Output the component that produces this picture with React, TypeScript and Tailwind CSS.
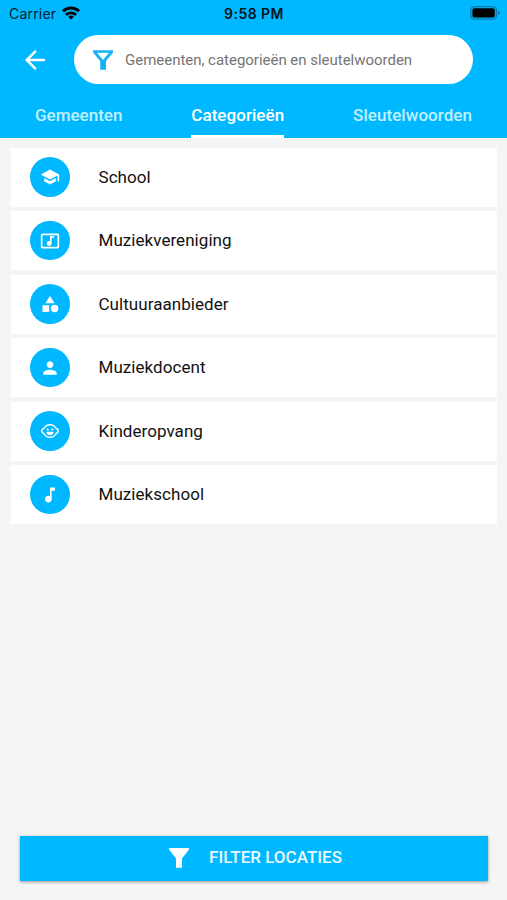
import type { ReactNode } from 'react';
import { MdArrowBack, MdCategory, MdMusicNote, MdMusicVideo, MdPerson, MdSchool } from 'react-icons/md';

function ChildFace() {
  return (
    <svg className="size-5" viewBox="0 0 24 24" fill="none" stroke="currentColor" strokeWidth="1.8">
      <path d="M4.9 8.7a8 8 0 0 1 14.2 0c1.6.5 2.8 1.8 2.8 3.3s-1.2 2.8-2.8 3.3a8 8 0 0 1-14.2 0C3.3 14.8 2.1 13.5 2.1 12s1.2-2.8 2.8-3.3z" />
      <circle cx="9.2" cy="10.2" r="1.3" fill="currentColor" stroke="none" />
      <circle cx="14.8" cy="10.2" r="1.3" fill="currentColor" stroke="none" />
      <path d="M7.8 12.9h8.4v.6a4.2 3.4 0 0 1-8.4 0z" fill="currentColor" stroke="none" />
    </svg>
  );
}

const categories: { label: string; icon: ReactNode }[] = [
  { label: 'School', icon: <MdSchool className="size-5" /> },
  { label: 'Muziekvereniging', icon: <MdMusicVideo className="size-5" /> },
  { label: 'Cultuuraanbieder', icon: <MdCategory className="size-5" /> },
  { label: 'Muziekdocent', icon: <MdPerson className="size-5" /> },
  { label: 'Kinderopvang', icon: <ChildFace /> },
  { label: 'Muziekschool', icon: <MdMusicNote className="size-5" /> },
];

function StatusBar() {
  return (
    <div className="grid h-[27px] grid-cols-3 items-center pl-[9px] pr-[7px] font-['Inter',sans-serif] text-[14px] text-[#06202c]">
      <div className="flex items-center gap-[6px]">
        <span className="tracking-[0.2px]">Carrier</span>
        <svg className="-mt-0.5 h-[14px] w-[18px]" viewBox="0 0 18 14" fill="none" stroke="#000" strokeWidth="2.9">
          <path d="M1 5.3a11.5 11.5 0 0 1 16 0" />
          <path d="M4 8.9a7.2 7.2 0 0 1 10 0" />
          <path d="M9 13.5 6.2 10.9a4 4 0 0 1 5.6 0z" fill="#000" stroke="none" />
        </svg>
      </div>
      <span className="pr-px text-center font-semibold tracking-[0.45px] text-[#03131b]">9:58 PM</span>
      <svg className="-mt-px h-[14px] w-[30px] justify-self-end" viewBox="0 0 30 14">
        <rect x="0.8" y="0.7" width="25.6" height="12.4" rx="3.6" fill="none" stroke="#0879a6" strokeWidth="1.3" />
        <rect x="2.4" y="2.3" width="22.4" height="9.2" rx="2" fill="#000" />
        <path d="M28 4.8V9q1.7-.6 1.7-2.1T28 4.800z" fill="#0879a6" />
      </svg>
    </div>
  );
}

export default function App() {
  return (
    <div className="flex h-[900px] w-[507px] flex-col bg-[#f5f5f5] font-['Roboto',sans-serif]">
      {/* Header */}
      <header className="h-[137.5px] bg-[#00b8ff]">
        <StatusBar />
        <div className="flex items-center pl-5 pt-2">
          <button type="button" aria-label="Terug" className="text-white">
            <MdArrowBack className="size-[30px]" />
          </button>
          <label className="ml-6 flex h-[49px] w-[399px] items-center rounded-full bg-white pl-[19px]">
            <svg className="size-[20px] text-[#14b4f5]" viewBox="0 0 20 20" fill="currentColor" fillRule="evenodd">
              <path d="M0 .2h20v2.3l-7 8.500v8.800H7.200V11L0 2.500zM4 2.700 10 9.900l6-7.200z" />
            </svg>
            <input
              type="text"
              placeholder="Gemeenten, categorieën en sleutelwoorden"
              className="ml-3 flex-1 pt-[2px] text-[15px] tracking-[-0.02px] outline-none placeholder:text-[#757575]"
            />
          </label>
        </div>

        {/* Tabs */}
        <nav className="flex h-[53.5px] justify-between px-[35px] text-[17px] font-medium text-[#c0f1ff]">
          <button type="button" className="h-full leading-[62px]">Gemeenten</button>
          <button type="button" className="h-full border-b-[3px] border-white leading-[62px] tracking-[0.05px] text-white">Categorieën</button>
          <button type="button" className="h-full leading-[62px] tracking-[0.05px]">Sleutelwoorden</button>
        </nav>
      </header>

      {/* Category list */}
      <ul className="flex flex-1 flex-col gap-[4.5px] pl-[10.5px] pr-[10px] pt-[10px]">
        {categories.map(({ label, icon }) => (
          <li key={label} className="flex h-[59px] items-center bg-white pl-[19.5px]">
            <span className="flex size-[39.5px] items-center justify-center rounded-full bg-[#00b8ff] text-white">
              {icon}
            </span>
            <span className="ml-[29px] pt-px text-[17px] tracking-[0.05px] text-[#111]">{label}</span>
          </li>
        ))}
      </ul>

      {/* Filter button */}
      <button
        type="button"
        className="mb-[19px] ml-[20px] mr-[19px] flex h-[45px] items-center justify-center bg-[#00b8ff] pb-[2px] pl-[3px] text-[17px] font-medium text-[#e8faff] shadow-[0_1px_3px_rgba(0,0,0,0.4)]"
      >
        <svg className="mr-5 mt-px size-[20px] text-white" viewBox="0 0 20 20" fill="currentColor">
          <path d="M0 0h20v1.600l-7 8.900v9.200H7v-9.200L0 1.600z" />
        </svg>
        FILTER LOCATIES
      </button>
    </div>
  );
}
